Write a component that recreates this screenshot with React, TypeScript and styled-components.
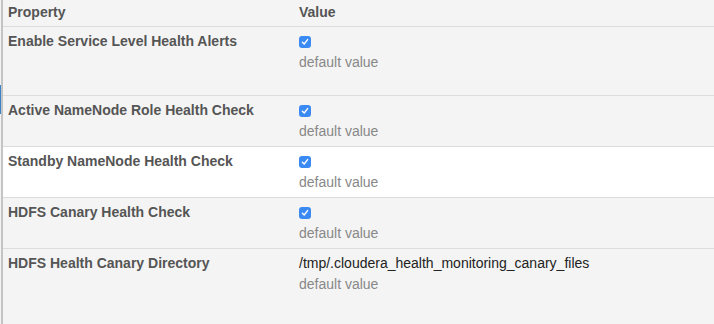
import React from "react";
import styled, { createGlobalStyle } from "styled-components";

const GlobalStyle = createGlobalStyle`
    html, body {
        margin: 0;
        padding: 0;
        background: #f4f4f4;
    }
    body {
        font-family: "Liberation Sans", Arial, Helvetica, sans-serif;
        font-size: 14px;
        line-height: 20px;
        color: #333;
    }
`;

const Page = styled.div`
    display: flex;
    min-height: 324px;
`;

const Gutter = styled.div`
    width: 1px;
    flex-shrink: 0;
    padding-top: 85px;
`;

const GutterMark = styled.div`
    height: 29px;
    background: #3a83c9;
`;

const Table = styled.div`
    flex: 1;
    border-left: 2px solid #c4c4c4;
    display: flex;
    flex-direction: column;
`;

const Row = styled.div<{ $white?: boolean; $grow?: boolean; $header?: boolean }>`
    display: grid;
    grid-template-columns: 291px 1fr;
    background: ${(p) => (p.$white ? "#ffffff" : "#f4f4f4")};
    border-bottom: ${(p) => (p.$grow ? "none" : "1px solid #dcdcdc")};
    padding: ${(p) => (p.$header ? "2px 0 4px" : "4px 0 5px")};
    flex-grow: ${(p) => (p.$grow ? 1 : 0)};
`;

const Label = styled.div`
    padding: 0 5px;
    font-weight: bold;
    color: #555;
`;

const ValueCell = styled.div<{ $extra?: boolean }>`
    padding: 0 5px ${(p) => (p.$extra ? "18px" : "0")};
    display: flex;
    flex-direction: column;
`;

const HeaderValue = styled.span`
    font-weight: bold;
    color: #555;
`;

const CheckLine = styled.div`
    height: 21px;
    display: flex;
    align-items: flex-start;
    padding-top: 5px;
    box-sizing: border-box;
`;

const CheckBox = styled.span`
    width: 12px;
    height: 12px;
    border-radius: 3px;
    background: #3b8af3;
    display: inline-flex;
    align-items: center;
    justify-content: center;
`;

const PathText = styled.div`
    color: #222;
    height: 21px;
`;

const DefaultNote = styled.div`
    color: #888;
`;

type Prop = {
    label: string;
    path?: string;
    white?: boolean;
    extra?: boolean;
    grow?: boolean;
};

const props: Prop[] = [
    { label: "Enable Service Level Health Alerts", extra: true },
    { label: "Active NameNode Role Health Check" },
    { label: "Standby NameNode Health Check", white: true },
    { label: "HDFS Canary Health Check" },
    { label: "HDFS Health Canary Directory", path: "/tmp/.cloudera_health_monitoring_canary_files", grow: true },
];

const Checked = () => (
    <CheckBox>
        <svg width="8" height="8" viewBox="0 0 8 8">
            <path d="M1.4 4.3 L3.2 6 L6.6 1.6" fill="none" stroke="#fff" strokeWidth="1.4" strokeLinecap="round" strokeLinejoin="round" />
        </svg>
    </CheckBox>
);

const App = () => {
    return (
        <Page>
            <GlobalStyle />
            <Gutter>
                <GutterMark />
            </Gutter>
            <Table>
                <Row $header>
                    <Label>Property</Label>
                    <ValueCell>
                        <HeaderValue>Value</HeaderValue>
                    </ValueCell>
                </Row>
                {props.map((p) => (
                    <Row key={p.label} $white={p.white} $grow={p.grow}>
                        <Label>{p.label}</Label>
                        <ValueCell $extra={p.extra}>
                            {p.path ? <PathText>{p.path}</PathText> : <CheckLine><Checked /></CheckLine>}
                            <DefaultNote>default value</DefaultNote>
                        </ValueCell>
                    </Row>
                ))}
            </Table>
        </Page>
    );
}

export default App;
